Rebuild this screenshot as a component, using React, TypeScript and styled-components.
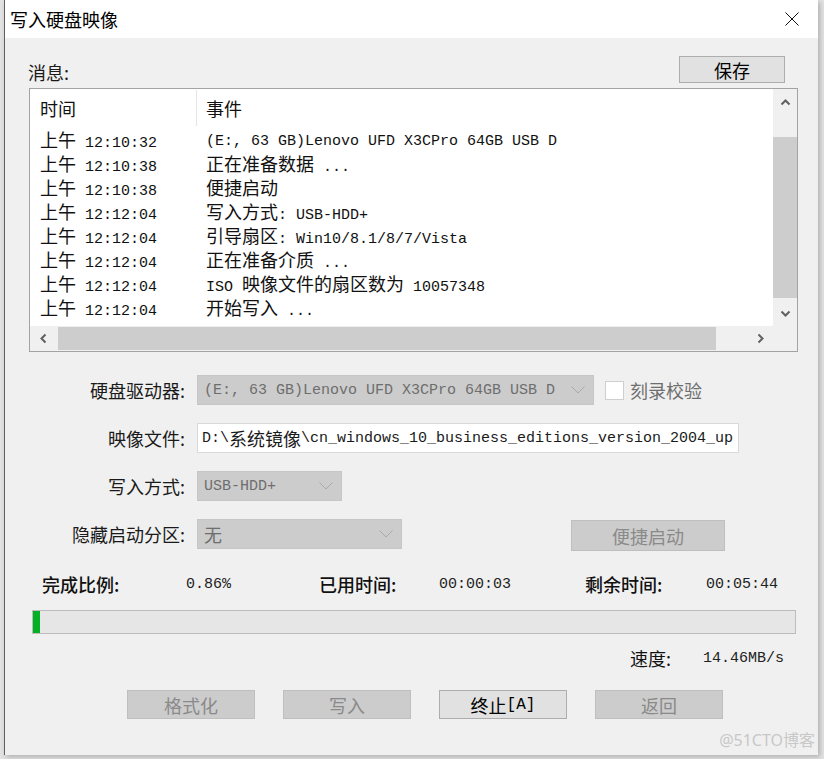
import React from "react";
import styled, { createGlobalStyle } from "styled-components";

const CJK = `"Noto Sans CJK SC", "Noto Sans", sans-serif`;
const MONO = `"Liberation Mono", "Noto Sans CJK SC", monospace`;

const GlobalStyle = createGlobalStyle`
  html, body {
    margin: 0;
    padding: 0;
    background: #e2e2e2;
  }
  body {
    font-family: ${CJK};
    color: #1a1a1a;
  }
  * {
    box-sizing: border-box;
  }
`;

const Desktop = styled.div`
  width: 824px;
  height: 759px;
  padding-left: 4px;
  overflow: hidden;
`;

const Window = styled.div`
  position: relative;
  width: 814px;
  height: 755px;
  background: #f0f0f0;
  border-left: 1px solid #5f5f5f;
  box-shadow: 2px 2px 5px rgba(0, 0, 0, 0.22);
  display: flex;
  flex-direction: column;
`;

const TitleBar = styled.div`
  height: 38px;
  background: #fff;
  display: flex;
  align-items: center;
  justify-content: space-between;
  padding-left: 5px;
`;

const Title = styled.div`
  font-size: 18px;
  color: #000;
`;

const CloseButton = styled.div`
  width: 52px;
  height: 38px;
  display: flex;
  align-items: center;
  justify-content: center;
`;

const Body = styled.div`
  padding: 18px 20px 0 24px;
  display: flex;
  flex-direction: column;
`;

const TopRow = styled.div`
  height: 27px;
  display: flex;
  align-items: center;
  justify-content: space-between;
  margin-bottom: 5px;
`;

const Caption = styled.div`
  font-size: 18px;
  margin-left: -1px;
  margin-top: 4px;
`;

const Button = styled.div<{ $disabled?: boolean; $width: number; $height?: number }>`
  width: ${(p) => p.$width}px;
  height: ${(p) => p.$height ?? 29}px;
  display: flex;
  align-items: center;
  justify-content: center;
  font-size: 18px;
  background: ${(p) => (p.$disabled ? "#cccccc" : "#e1e1e1")};
  border: 1px solid ${(p) => (p.$disabled ? "#bfbfbf" : "#adadad")};
  color: ${(p) => (p.$disabled ? "#8a8a8a" : "#000")};
`;

const SaveButton = styled(Button)`
  margin-right: 13px;
`;

const ListBox = styled.div`
  height: 264px;
  border: 1px solid #a3a3a3;
  background: #fff;
  display: grid;
  grid-template-columns: 1fr 24px;
  grid-template-rows: 1fr 25px;
`;

const Viewport = styled.div`
  overflow: hidden;
  background: #fff;
`;

const Columns = styled.div<{ $height: number }>`
  display: grid;
  grid-template-columns: 167px 1fr;
  height: ${(p) => p.$height}px;
  align-items: center;
  white-space: nowrap;
  font-family: ${MONO};
  font-size: 15px;
  color: #111;
`;

const HeaderCell = styled.div<{ $divider?: boolean }>`
  height: 36px;
  display: flex;
  align-items: center;
  padding-left: ${(p) => (p.$divider ? 10 : 9)}px;
  border-right: ${(p) => (p.$divider ? "1px solid #e5e5e5" : "none")};
  font-family: ${CJK};
  font-size: 18px;
`;

const Cell = styled.div<{ $first?: boolean }>`
  padding-left: ${(p) => (p.$first ? 10 : 9)}px;
  line-height: 24px;
`;

const Han = styled.span`
  font-family: ${CJK};
  font-size: 18px;
`;

const Mono = styled.span`
  font-family: ${MONO};
  font-size: 16px;
`;

const VScroll = styled.div`
  background: #f0f0f0;
  display: flex;
  flex-direction: column;
`;

const HScroll = styled.div`
  background: #f0f0f0;
  display: flex;
  align-items: stretch;
`;

const Corner = styled.div`
  background: #f0f0f0;
`;

const ArrowBox = styled.div<{ $size: number }>`
  flex: 0 0 ${(p) => p.$size}px;
  display: flex;
  align-items: center;
  justify-content: center;
`;

const VThumb = styled.div`
  margin-top: 22px;
  height: 161px;
  background: #cdcdcd;
`;

const HThumb = styled.div`
  margin-left: 2px;
  width: 658px;
  background: #cdcdcd;
  margin-top: 1px;
  margin-bottom: 1px;
`;

const Spacer = styled.div`
  flex: 1;
`;

const Form = styled.div`
  margin-top: 23px;
  display: grid;
  grid-template-columns: 156px 1fr;
  column-gap: 12px;
  row-gap: 18px;
  grid-auto-rows: 30px;
  align-items: center;
`;

const FieldLabel = styled.div`
  text-align: right;
  font-size: 18px;
  color: #1a1a1a;
`;

const ControlRow = styled.div`
  display: flex;
  align-items: center;
  height: 30px;
`;

const Select = styled.div<{ $width: number }>`
  width: ${(p) => p.$width}px;
  height: 30px;
  background: #cccccc;
  border: 1px solid #c6c6c6;
  display: flex;
  align-items: center;
  justify-content: space-between;
  padding: 0 8px 0 6px;
  font-family: ${MONO};
  font-size: 15px;
  color: #6e6e6e;
  white-space: nowrap;
  overflow: hidden;
`;

const TextField = styled.div`
  width: 542px;
  height: 30px;
  background: #fff;
  border: 1px solid #d9d9d9;
  display: flex;
  align-items: center;
  padding-left: 4px;
  font-family: ${MONO};
  font-size: 15px;
  color: #1a1a1a;
  white-space: nowrap;
  overflow: hidden;
`;

const CheckBox = styled.div`
  width: 19px;
  height: 19px;
  margin-left: 11px;
  background: #fff;
  border: 1px solid #cfcfcf;
`;

const CheckText = styled.div`
  margin-left: 6px;
  font-size: 18px;
  color: #6e6e6e;
`;

const QuickButton = styled(Button)`
  margin-left: 169px;
  margin-top: 3px;
`;

const Stats = styled.div`
  margin-top: 22px;
  height: 24px;
  padding-left: 13px;
  display: grid;
  grid-template-columns: 144px 133px 120px 146px 121px auto;
  align-items: center;
`;

const StatLabel = styled.div`
  font-size: 18px;
  font-weight: 500;
  color: #111;
`;

const StatValue = styled.div`
  font-family: ${MONO};
  font-size: 15px;
  color: #222;
`;

const Progress = styled.div`
  margin: 15px 0 0 3px;
  width: 764px;
  height: 24px;
  background: #e6e6e6;
  border: 1px solid #bcbcbc;
`;

const ProgressFill = styled.div`
  height: 100%;
  min-width: 7px;
  background: #06b025;
`;

const SpeedRow = styled.div`
  margin-top: 11px;
  height: 24px;
  padding-left: 601px;
  display: grid;
  grid-template-columns: 73px auto;
  align-items: center;
`;

const SpeedLabel = styled.div`
  font-size: 18px;
  color: #111;
`;

const Actions = styled.div`
  margin-top: 21px;
  padding-left: 98px;
  display: flex;
  gap: 28px;
`;

const Watermark = styled.div`
  position: absolute;
  right: 3px;
  bottom: 4px;
  font-family: "Noto Sans", ${CJK};
  font-size: 16px;
  color: #c8c8c8;
`;

const HAN_RE = /([\u2e80-\u9fff\uff01-\uff60]+)/;

function Mixed({ text }: { text: string }) {
  return (
    <>
      {text.split(HAN_RE).map((part, i) =>
        HAN_RE.test(part) ? <Han key={i}>{part}</Han> : <span key={i}>{part}</span>
      )}
    </>
  );
}

function Chevron({ dir, color = "#606060" }: { dir: "up" | "down" | "left" | "right"; color?: string }) {
  const rot = { up: 0, right: 90, down: 180, left: 270 }[dir];
  return (
    <svg width="11" height="11" viewBox="0 0 11 11">
      <path
        d="M1.5 7.5 L5.5 3.5 L9.5 7.5"
        fill="none"
        stroke={color}
        strokeWidth="2"
        transform={`rotate(${rot} 5.5 5.5)`}
      />
    </svg>
  );
}

function DropArrow() {
  return (
    <svg width="14" height="8" viewBox="0 0 14 8">
      <path d="M0.5 0.5 L7 7 L13.5 0.5" fill="none" stroke="#a9a9a9" strokeWidth="1" />
    </svg>
  );
}

const messages = [
  ["12:10:32", "(E:, 63 GB)Lenovo UFD X3CPro 64GB USB D"],
  ["12:10:38", "正在准备数据 ..."],
  ["12:10:38", "便捷启动"],
  ["12:12:04", "写入方式: USB-HDD+"],
  ["12:12:04", "引导扇区: Win10/8.1/8/7/Vista"],
  ["12:12:04", "正在准备介质 ..."],
  ["12:12:04", "ISO 映像文件的扇区数为 10057348"],
  ["12:12:04", "开始写入 ..."],
];

const percent = 0.86;

export default function App() {
  return (
    <Desktop>
      <GlobalStyle />
      <Window>
        <TitleBar>
          <Title>写入硬盘映像</Title>
          <CloseButton>
            <svg width="14" height="14" viewBox="0 0 14 14">
              <path d="M0.5 0.5 L13.5 13.5 M13.5 0.5 L0.5 13.5" stroke="#111" strokeWidth="1" />
            </svg>
          </CloseButton>
        </TitleBar>
        <Body>
          <TopRow>
            <Caption>消息:</Caption>
            <SaveButton $width={106} $height={27}>保存</SaveButton>
          </TopRow>
          <ListBox>
            <Viewport>
              <Columns $height={38}>
                <HeaderCell $divider>时间</HeaderCell>
                <HeaderCell>事件</HeaderCell>
              </Columns>
              {messages.map(([time, event], i) => (
                <Columns key={i} $height={24}>
                  <Cell $first>
                    <Han>上午</Han> {time}
                  </Cell>
                  <Cell>
                    <Mixed text={event} />
                  </Cell>
                </Columns>
              ))}
            </Viewport>
            <VScroll>
              <ArrowBox $size={26}>
                <Chevron dir="up" />
              </ArrowBox>
              <VThumb />
              <Spacer />
              <ArrowBox $size={26}>
                <Chevron dir="down" />
              </ArrowBox>
            </VScroll>
            <HScroll>
              <ArrowBox $size={26}>
                <Chevron dir="left" />
              </ArrowBox>
              <HThumb />
              <Spacer />
              <ArrowBox $size={26}>
                <Chevron dir="right" />
              </ArrowBox>
            </HScroll>
            <Corner />
          </ListBox>

          <Form>
            <FieldLabel>硬盘驱动器:</FieldLabel>
            <ControlRow>
              <Select $width={397}>
                <span>(E:, 63 GB)Lenovo UFD X3CPro 64GB USB D</span>
                <DropArrow />
              </Select>
              <CheckBox />
              <CheckText>刻录校验</CheckText>
            </ControlRow>

            <FieldLabel>映像文件:</FieldLabel>
            <ControlRow>
              <TextField>
                <Mixed text="D:\系统镜像\cn_windows_10_business_editions_version_2004_up" />
              </TextField>
            </ControlRow>

            <FieldLabel>写入方式:</FieldLabel>
            <ControlRow>
              <Select $width={145}>
                <span>USB-HDD+</span>
                <DropArrow />
              </Select>
            </ControlRow>

            <FieldLabel>隐藏启动分区:</FieldLabel>
            <ControlRow>
              <Select $width={205}>
                <Han>无</Han>
                <DropArrow />
              </Select>
              <QuickButton $disabled $width={154} $height={31}>
                便捷启动
              </QuickButton>
            </ControlRow>
          </Form>

          <Stats>
            <StatLabel>完成比例:</StatLabel>
            <StatValue>0.86%</StatValue>
            <StatLabel>已用时间:</StatLabel>
            <StatValue>00:00:03</StatValue>
            <StatLabel>剩余时间:</StatLabel>
            <StatValue>00:05:44</StatValue>
          </Stats>

          <Progress>
            <ProgressFill style={{ width: `${percent}%` }} />
          </Progress>

          <SpeedRow>
            <SpeedLabel>速度:</SpeedLabel>
            <StatValue>14.46MB/s</StatValue>
          </SpeedRow>

          <Actions>
            <Button $disabled $width={128}>格式化</Button>
            <Button $disabled $width={128}>写入</Button>
            <Button $width={128}>
              终止<Mono>[A]</Mono>
            </Button>
            <Button $disabled $width={128}>返回</Button>
          </Actions>
        </Body>
        <Watermark>@51CTO博客</Watermark>
      </Window>
    </Desktop>
  );
}
